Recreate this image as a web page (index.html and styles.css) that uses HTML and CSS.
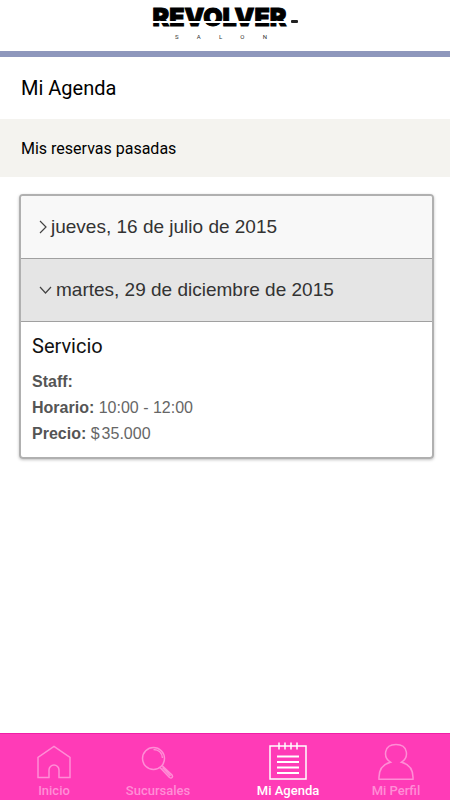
FILE: index.html
```html
<!DOCTYPE html>
<html lang="es">
<head>
    <meta charset="UTF-8">
    <meta name="viewport" content="width=device-width, initial-scale=1.0">
    <title>Revolver Salon - Mi Agenda</title>
    <link rel="stylesheet" href="styles.css">
</head>
<body>
    <header class="header">
        <div class="logo">
            <span class="logo-name">REVOLVER</span>
            <span class="logo-dash"></span>
        </div>
        <div class="logo-sub"><span>S</span><span>A</span><span>L</span><span>O</span><span>N</span></div>
    </header>

    <main class="content">
        <h1>Mi Agenda</h1>
        <h2>Mis reservas pasadas</h2>

        <div class="accordion">
            <button class="accordion-btn" type="button" aria-expanded="false">
                <svg width="8" height="14" viewBox="0 0 8 14"><path d="M1 1l6 6-6 6"/></svg>
                jueves, 16 de julio de 2015
            </button>
            <button class="accordion-btn open" type="button" aria-expanded="true" aria-controls="reserva">
                <svg width="13" height="8" viewBox="0 0 13 8"><path d="M1 1l5.500 6L12 1"/></svg>
                martes, 29 de diciembre de 2015
            </button>
            <div class="reserva" id="reserva">
                <h3>Servicio</h3>
                <p><strong>Staff:</strong></p>
                <p><strong>Horario:</strong> 10:00 - 12:00</p>
                <p><strong>Precio:</strong> <span class="moneda">$</span>35.000</p>
            </div>
        </div>
    </main>

    <nav class="tabs">
        <a href="#inicio">
            <svg width="34" height="38" viewBox="0 0 34 38"><path d="M1 35.500V15.500L17 4.500l16 11v20H22V28a5 5 0 0 0-10 0v7.500z"/></svg>
            Inicio
        </a>
        <a href="#sucursales">
            <svg width="34" height="38" viewBox="0 0 34 38">
                <circle cx="12.500" cy="16.500" r="11"/>
                <path d="M12.500 7.500c5 0 8.500 3.500 9 8.500"/>
                <path d="M19 25.500l9.500 10c2 1.500 4-.5 2.500-2.500L21 23.500M21.500 25.500l8 8.500"/>
            </svg>
            Sucursales
        </a>
        <a href="#agenda" class="active" aria-current="page">
            <svg width="38" height="38" viewBox="0 0 38 38">
                <path d="M1 4h36v33H1zM10 .5v7M16 .5v7M22 .5v7M28 .5v7"/>
                <path class="lines" d="M8 14.500h22M8 20h22M8 25.500h22M8 31h22"/>
            </svg>
            Mi Agenda
        </a>
        <a href="#perfil">
            <svg width="36" height="38" viewBox="0 0 36 38"><path d="M1 37.200c-.5-9 3.500-15 11.500-17C5 15.500 5.500 2.500 18 2.500S31 15.500 23.500 20.200c8 2 12 8 11.500 17z"/></svg>
            Mi Perfil
        </a>
    </nav>

    <script>
        // Abrir y cerrar el detalle de la reserva
        const openBtn = document.querySelector('.accordion-btn.open');
        const reserva = document.getElementById('reserva');

        openBtn.onclick = function () {
            reserva.hidden = !reserva.hidden;
            openBtn.setAttribute('aria-expanded', String(!reserva.hidden));
        };
    </script>
</body>
</html>
```
FILE: styles.css
```css
* {
    box-sizing: border-box;
}

body {
    font-family: Roboto, Arial, sans-serif;
    background-color: #fff;
    color: #000;
    margin: 0;
    min-height: 100vh;
    display: flex;
    flex-direction: column;
}

.header {
    display: flex;
    flex-direction: column;
    align-items: center;
    padding: 8px 0;
    border-bottom: 6px solid #8e97bc;
    height: 57px;
}

.logo {
    display: flex;
    align-items: center;
    gap: 4px;
    height: 18px;
}

.logo-name {
    position: relative;
    font-family: Inter, sans-serif;
    font-size: 25px;
    font-weight: 900;
    line-height: 18px;
    -webkit-text-stroke: 1px #000;
}

/* corte blanco que atraviesa las letras */
.logo-name::after {
    content: "";
    position: absolute;
    left: -1px;
    right: -1px;
    top: 13px;
    height: 2px;
    background-color: #fff;
}

.logo-dash {
    width: 7px;
    height: 3px;
    margin-top: 8px;
    border-radius: 1px;
    background-color: #222;
}

.logo-sub {
    display: flex;
    justify-content: space-between;
    width: 92px;
    margin: 8px 8px 0 0;
    font-size: 6px;
    line-height: 6px;
    color: #333;
}

.content {
    flex: 1;
}

h1 {
    margin: 0;
    padding: 0 21px;
    font-size: 20px;
    font-weight: 400;
    line-height: 62px;
}

h2 {
    margin: 0;
    padding: 1px 21px 0;
    font-size: 16px;
    font-weight: 400;
    line-height: 57px;
    background-color: #f4f3ef;
}

.accordion {
    margin: 17px 16px 20px 19px;
    border: 2px solid #b0b0b0;
    border-radius: 4px;
    box-shadow: 0 1px 3px rgba(0, 0, 0, 0.25);
    font-family: "Liberation Sans", Arial, sans-serif;
    overflow: hidden;
}

.accordion-btn {
    display: flex;
    align-items: center;
    gap: 4px;
    width: 100%;
    padding: 0 18px;
    border: none;
    border-bottom: 1px solid #a0a0a0;
    background-color: #f8f8f8;
    color: #333;
    font-family: inherit;
    font-size: 19px;
    line-height: 62px;
    text-align: left;
    cursor: pointer;
}

.accordion-btn.open {
    background-color: #e5e5e5;
}

.accordion-btn svg {
    fill: none;
    stroke: #444;
    stroke-width: 1.2;
}

.reserva {
    padding: 10px 11px;
    font-size: 16px;
    line-height: 26px;
    color: #666;
}

.reserva h3 {
    margin: 0 0 9px;
    font-family: Roboto, Arial, sans-serif;
    font-size: 20px;
    font-weight: 400;
    line-height: 28px;
    color: #111;
}

.reserva p {
    margin: 0;
}

.reserva strong {
    color: #555;
}

.moneda {
    margin-right: 2px;
}

.tabs {
    display: grid;
    grid-template-columns: 19fr 33fr 32fr 22fr;
    padding: 8px 10px 1px 16px;
    background-color: #ff3bb7;
    border-top: 1px solid #ef1fa6;
}

.tabs a {
    display: flex;
    flex-direction: column;
    align-items: center;
    gap: 3px;
    color: #ff8ed6;
    font-size: 13px;
    font-weight: 500;
    line-height: 16px;
    text-decoration: none;
}

.tabs a.active {
    color: #fff;
}

.tabs svg {
    fill: none;
    stroke: currentColor;
    stroke-width: 1.5;
}

.tabs .lines {
    stroke-width: 2;
}
```
